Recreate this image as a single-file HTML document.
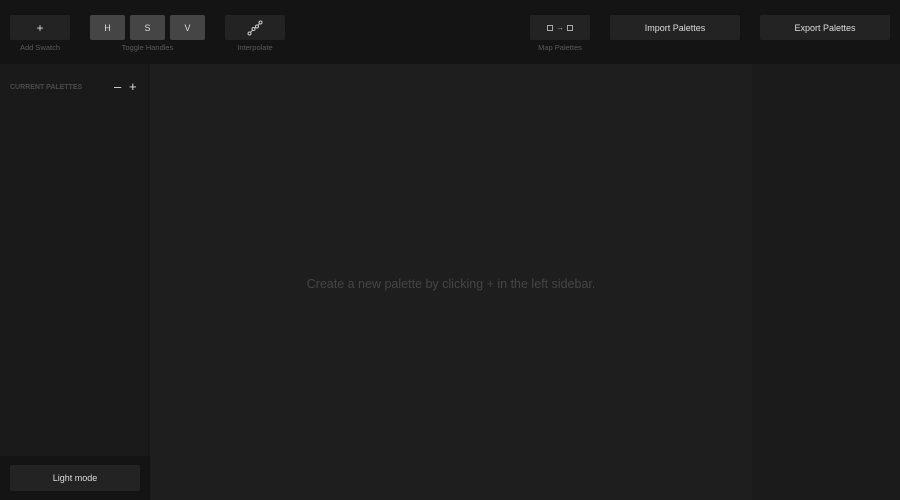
<!DOCTYPE html><html><head><style>
body{margin:0;width:900px;height:500px;background:#1e1e1e;font-family:"Liberation Sans",sans-serif;position:relative;overflow:hidden}
div{position:absolute;box-sizing:border-box}
.b{background:#232323;border-radius:2px;color:#ddd;font-size:9px;display:flex;align-items:center;justify-content:center;top:15px;height:25px}
.h{background:#454545}
.l{color:#5a5a5a;font-size:7.5px;top:43px;text-align:center}
.sq{position:static;display:inline-block;width:4px;height:4px;border:1px solid #aaa}
</style></head><body>
<div style="left:0;top:0;width:900px;height:64px;background:#141414"></div>
<div style="left:0;top:64px;width:148px;height:436px;background:#1a1a1a"></div>
<div style="left:148px;top:64px;width:2px;height:436px;background:#161616"></div>
<div style="left:752px;top:64px;width:148px;height:436px;background:#1b1b1b"></div>
<div style="left:0;top:456px;width:150px;height:44px;background:#141414"></div>
<div class="b" style="left:10px;width:60px;font-size:12px">+</div>
<div class="l" style="left:10px;width:60px">Add Swatch</div>
<div class="b h" style="left:90px;width:35px">H</div>
<div class="b h" style="left:130px;width:35px">S</div>
<div class="b h" style="left:170px;width:35px">V</div>
<div class="l" style="left:90px;width:115px">Toggle Handles</div>
<div class="b" style="left:225px;width:60px"><svg width="16" height="16" viewBox="0 0 16 16"><g fill="none" stroke="#ccc" stroke-width="1"><circle cx="2.5" cy="13.5" r="1.5"/><circle cx="6.5" cy="9" r="1.5"/><circle cx="10" cy="6.5" r="1.5"/><circle cx="13.5" cy="2.5" r="1.5"/><path d="M3.5 12.3L5.5 10.2M7.7 8.1L8.8 7.4M11 5.3L12.5 3.7"/></g></svg></div>
<div class="l" style="left:225px;width:60px">Interpolate</div>
<div class="b" style="left:530px;width:60px;font-size:8px;color:#aaa;gap:3px"><span class="sq"></span>→<span class="sq"></span></div>
<div class="l" style="left:530px;width:60px">Map Palettes</div>
<div class="b" style="left:610px;width:130px">Import Palettes</div>
<div class="b" style="left:760px;width:130px">Export Palettes</div>
<div style="left:10px;top:84px;font-size:7px;font-weight:bold;color:#4a4a4a">CURRENT PALETTES</div>
<div style="left:114px;top:79px;font-size:13px;color:#ddd">–</div>
<div style="left:129px;top:79px;font-size:13px;color:#ddd">+</div>
<div style="left:150px;top:277px;width:602px;text-align:center;font-size:12.5px;color:#454545">Create a new palette by clicking + in the left sidebar.</div>
<div class="b" style="left:10px;top:465px;width:130px;height:26px">Light mode</div>
</body></html>
